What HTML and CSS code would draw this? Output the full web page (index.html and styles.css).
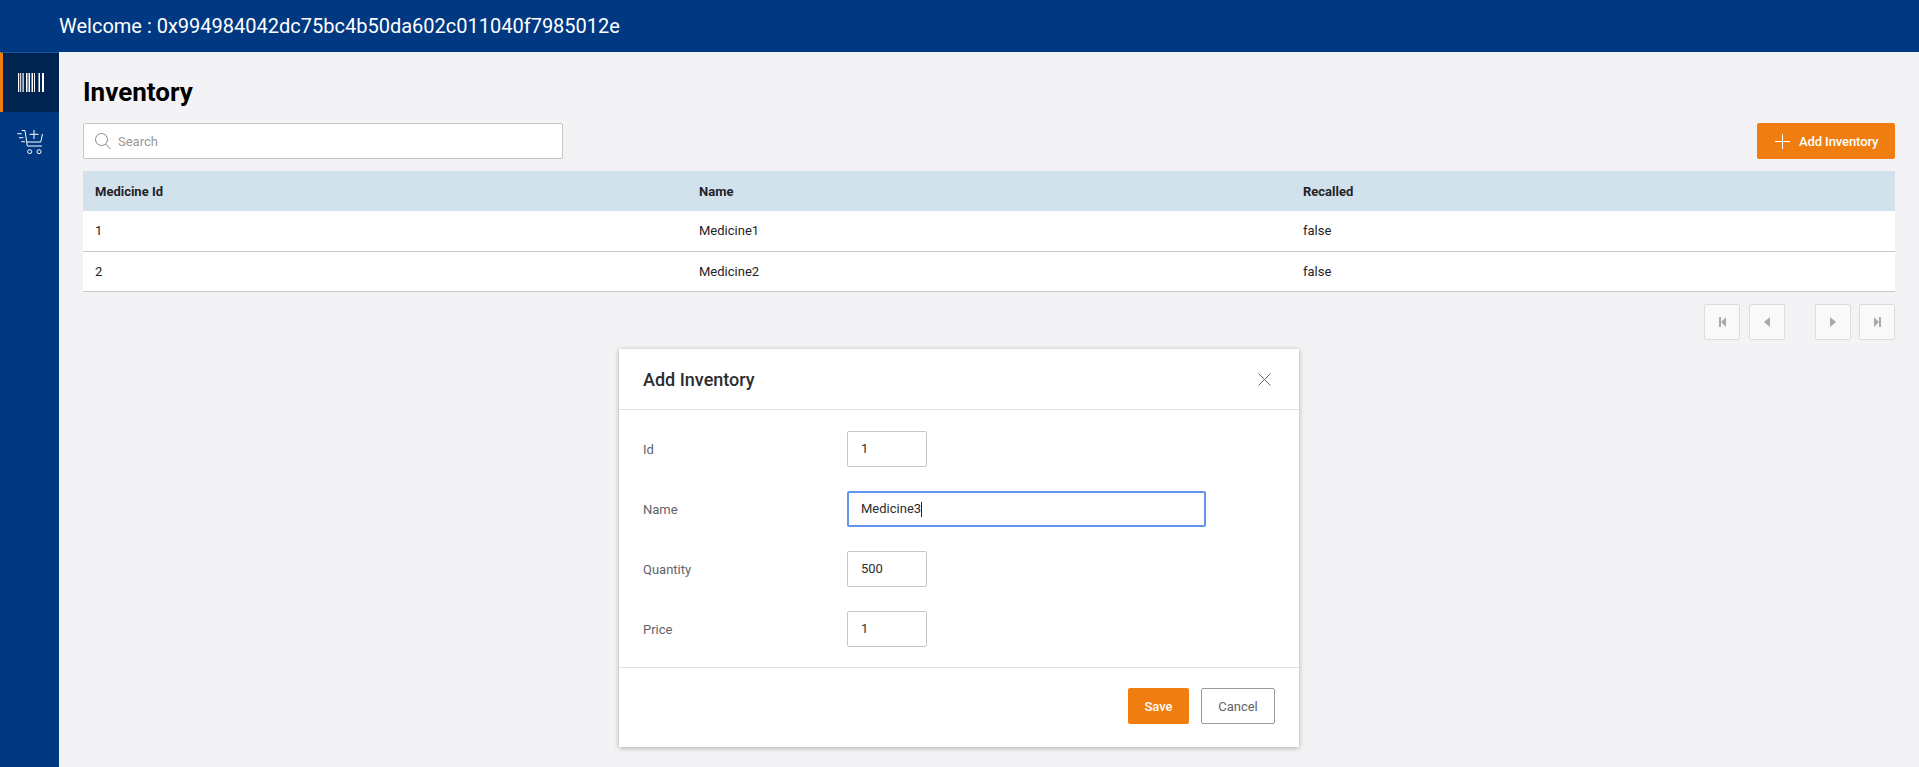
FILE: index.html
```html
<!DOCTYPE html>
<html lang="en">
<head>
<meta charset="utf-8">
<title>Inventory</title>
<link rel="stylesheet" href="styles.css">
</head>
<body>
<header class="topbar">Welcome : 0x994984042dc75bc4b50da602c011040f7985012e</header>
<div class="shell">
  <nav class="sidebar">
    <a class="nav-item nav-item-active">
      <svg class="nav-icon" width="26" height="19" viewBox="0 0 26 19" fill="#fff"><path d="M0 0h1.200v19H0zM2.200 0h1v19h-1zM4.500 0h1.200v19H4.500zM8 0h1.500v19H8zM10.500 0h1.500v19h-1.500zM13.500 0h1.500v19h-1.500zM16 0h1v19h-1zM20.500 0h1.500v19h-1.500zM24 0h2v19h-2z"/></svg>
    </a>
    <a class="nav-item">
      <svg class="nav-icon" width="26" height="24" viewBox="0 0 26 24" fill="none" stroke="#fff" stroke-width="1"><path d="M17 0v9M12.500 4.300h9M.3 3.700h4.400M2 7.700h4.300M4.300 11.700H8M4.700.5H8l2.300 15.500H25M25.500 4l-1.800 8H9.500"/><circle cx="12.700" cy="21.700" r="2"/><circle cx="22" cy="21.700" r="2"/></svg>
    </a>
  </nav>
  <main class="content">
    <h1 class="page-title">Inventory</h1>
    <div class="toolbar">
      <label class="search">
        <svg width="16" height="16" viewBox="0 0 16 16" fill="none" stroke="#888" stroke-width="1"><circle cx="6.500" cy="6.500" r="6"/><path d="M10.500 11l5 5"/></svg>
        <span class="search-text">Search</span>
      </label>
      <button class="btn-add">
        <svg width="15" height="15" viewBox="0 0 15 15" stroke="#fff" stroke-width="1"><path d="M7.500 0v15M0 7.500h15"/></svg>
        <span>Add Inventory</span>
      </button>
    </div>
    <table class="grid">
      <thead><tr><th>Medicine Id</th><th>Name</th><th>Recalled</th></tr></thead>
      <tbody>
        <tr><td>1</td><td>Medicine1</td><td>false</td></tr>
        <tr><td>2</td><td>Medicine2</td><td>false</td></tr>
      </tbody>
    </table>
    <div class="pager">
      <button class="page-btn"><svg width="7" height="10" viewBox="0 0 7 10"><path d="M0 0h2v10H0zM7 0v10L2 5z" fill="#aaa"/></svg></button>
      <button class="page-btn"><svg width="6" height="10" viewBox="0 0 6 10"><path d="M6 0v10L0 5z" fill="#aaa"/></svg></button>
      <span class="page-spacer"></span>
      <button class="page-btn"><svg width="6" height="10" viewBox="0 0 6 10"><path d="M0 0v10l6-5z" fill="#aaa"/></svg></button>
      <button class="page-btn page-btn-last"><svg width="7" height="10" viewBox="0 0 7 10"><path d="M5 0h2v10H5zM0 0v10l5-5z" fill="#aaa"/></svg></button>
    </div>
  </main>
</div>
<section class="modal">
  <div class="modal-head">
    <h2 class="modal-title">Add Inventory</h2>
    <svg width="13" height="13" viewBox="0 0 13 13" stroke="#666" stroke-width="1"><path d="M.5.500l12 12M12.500.500l-12 12"/></svg>
  </div>
  <div class="modal-body">
    <div class="field"><span class="field-label">Id</span><span class="input input-short">1</span></div>
    <div class="field"><span class="field-label">Name</span><span class="input input-focus">Medicine3<i class="caret"></i></span></div>
    <div class="field"><span class="field-label">Quantity</span><span class="input input-short">500</span></div>
    <div class="field"><span class="field-label">Price</span><span class="input input-short">1</span></div>
  </div>
  <div class="modal-foot">
    <button class="btn-save">Save</button>
    <button class="btn-cancel">Cancel</button>
  </div>
</section>
</body>
</html>
```
FILE: styles.css
```css
* { box-sizing: border-box; }
html, body { margin: 0; height: 100%; overflow: hidden; }
body { font-family: Roboto, "Liberation Sans", sans-serif; background: #f3f3f6; color: #1f2328; display: flex; flex-direction: column; }
.topbar { height: 52px; flex: none; background: #003882; color: #fff; font-size: 20px; line-height: 52px; padding-left: 59px; }
.shell { flex: 1; display: flex; min-height: 0; }
.sidebar { width: 59px; flex: none; background: #003882; }
.nav-item { height: 60px; display: flex; align-items: center; justify-content: center; }
.nav-item-active { background: #00234f; border-left: 3px solid #ef7d0f; border-top: 1px solid #0b58a6; }
.content { flex: 1; padding: 0 24px; min-width: 0; }
.page-title { margin: 24px 0 0; font-size: 26px; line-height: 32px; font-weight: 700; color: #000; }
.toolbar { margin-top: 15px; display: flex; justify-content: space-between; }
.search { width: 480px; height: 36px; background: #fff; border: 1px solid #c6c6c6; border-radius: 2px; display: flex; align-items: center; gap: 7px; padding-left: 11px; }
.search-text { font-size: 13px; color: #999; }
.btn-add { width: 138px; height: 36px; border: 0; border-radius: 2px; background: #ef7d0f; color: #fff; font: 500 13px Roboto, sans-serif; letter-spacing: -.1px; display: flex; align-items: center; gap: 9px; padding-left: 18px; }
.grid { width: 100%; margin-top: 12px; border-collapse: collapse; table-layout: fixed; font-size: 13px; }
.grid th { height: 40px; background: #d2e2ed; text-align: left; font-weight: 700; padding: 0 12px; }
.grid td { height: 40px; background: #fff; padding: 0 12px; border-bottom: 1px solid #c8c8c8; }
.pager { margin-top: 12px; display: flex; justify-content: flex-end; gap: 9px; }
.page-btn { width: 36px; height: 36px; padding: 0; background: #f9f9f9; border: 1px solid #dcdcdc; border-radius: 2px; display: flex; align-items: center; justify-content: center; }
.page-spacer { width: 12px; }
.page-btn-last { margin-left: -1px; }
.modal { position: absolute; left: 619px; top: 349px; width: 680px; height: 398px; background: #fff; box-shadow: 0 1px 5px rgba(0,0,0,.3); display: flex; flex-direction: column; }
.modal-head { height: 61px; flex: none; border-bottom: 1px solid #e2e2e2; display: flex; align-items: center; justify-content: space-between; padding: 0 28px 0 24px; }
.modal-title { margin: 0; font-size: 18px; font-weight: 500; color: #2a2d31; }
.modal-body { flex: 1; padding: 21px 24px 0; display: flex; flex-direction: column; gap: 24px; }
.field { display: flex; align-items: center; height: 36px; }
.field-label { width: 204px; font-size: 13px; color: #5f6368; }
.input { height: 36px; background: #fff; border: 1px solid #c6c6c6; border-radius: 2px; font-size: 13px; line-height: 34px; padding-left: 13px; color: #2a2d31; }
.input-short { width: 80px; }
.input-focus { width: 359px; border: 2px solid #6495ed; line-height: 32px; padding-left: 12px; }
.caret { display: inline-block; width: 1px; height: 15px; background: #222; vertical-align: middle; }
.modal-foot { height: 80px; flex: none; border-top: 1px solid #e2e2e2; display: flex; justify-content: flex-end; gap: 12px; padding: 20px 24px 0; }
.btn-save { width: 61px; height: 36px; border: 0; border-radius: 2px; background: #ef7d0f; color: #fff; font: 500 13px Roboto, sans-serif; }
.btn-cancel { width: 74px; height: 36px; border: 1px solid #999; border-radius: 2px; background: #fff; color: #5f6368; font: 400 13px Roboto, sans-serif; }
```
